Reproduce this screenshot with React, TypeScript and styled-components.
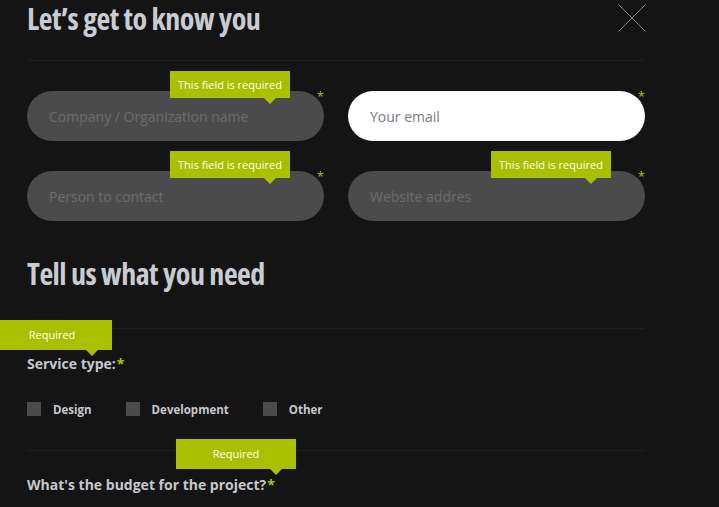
import React from 'react';
import styled, {createGlobalStyle} from 'styled-components';

type FieldType = {
    placeholder: string
    tip?: boolean
    focused?: boolean
}

const fields: FieldType[] = [
    {placeholder: 'Company / Organization name', tip: true},
    {placeholder: 'Your email', focused: true},
    {placeholder: 'Person to contact', tip: true},
    {placeholder: 'Website addres', tip: true},
]

const services = ['Design', 'Development', 'Other']

const Field = (props: FieldType) => {
    return (
        <FieldWrap>
            <Input placeholder={props.placeholder} focused={props.focused} autoFocus={props.focused}/>
            <Star>*</Star>
            {props.tip && <Tip left={143} top={-20} height={27}>This field is required</Tip>}
        </FieldWrap>
    )
}

export default function App() {
    return (
        <>
            <GlobalStyle/>
            <Page>
                <Header>
                    <Title>Let’s get to know you</Title>
                    <Close aria-label="close">
                        <svg width="28" height="28" viewBox="0 0 28 28">
                            <path d="M0.5 0.5 L27.5 27.5 M27.5 0.5 L0.5 27.5" stroke="#8a8a8a" strokeWidth="1" fill="none"/>
                        </svg>
                    </Close>
                </Header>
                <Divider/>

                <Fields>
                    {fields.map(f => <Field key={f.placeholder} {...f}/>)}
                </Fields>

                <SubTitle>Tell us what you need</SubTitle>
                <Divider top={37}/>

                <Label top={25}>
                    Service type:<Req>*</Req>
                    <Tip left={-35} top={-34} height={30}>Required</Tip>
                </Label>
                <Checks>
                    {services.map(s => (
                        <CheckItem key={s}>
                            <Box/>
                            {s}
                        </CheckItem>
                    ))}
                </Checks>
                <Divider top={34}/>

                <Label top={24}>
                    What's the budget for the project?<Req>*</Req>
                    <Tip left={149} top={-36} height={30}>Required</Tip>
                </Label>
            </Page>
        </>
    )
}

//=========================GLOBAL==================================

const GlobalStyle = createGlobalStyle`
  html, body {
    margin: 0;
    padding: 0;
    background: #141414;
    overflow: hidden;
  }
  body {
    font-family: "Open Sans", "Liberation Sans", sans-serif;
  }
`

const Page = styled.div`
  width: 618px;
  height: 507px;
  padding-left: 27px;
  box-sizing: content-box;
  display: flex;
  flex-direction: column;
`

//=========================HEADER==================================

const Header = styled.div`
  height: 60px;
  display: flex;
  justify-content: space-between;
  align-items: flex-start;
`

const Title = styled.h1`
  margin: 0;
  padding-top: 2px;
  font-family: "Open Sans", sans-serif;
  font-stretch: 75%;
  font-weight: 700;
  font-size: 30px;
  line-height: 34px;
  letter-spacing: -0.5px;
  color: #c9cdd3;
`

const SubTitle = styled(Title)`
  margin-top: 34px;
`

const Close = styled.div`
  width: 28px;
  height: 28px;
  margin-top: 4px;
  margin-right: -1px;
`

const Divider = styled.div<{ top?: number }>`
  height: 1px;
  background: #1f1f1f;
  margin-top: ${p => p.top || 0}px;
`

//=========================FIELDS==================================

const Fields = styled.div`
  margin-top: 30px;
  display: grid;
  grid-template-columns: 297px 297px;
  column-gap: 24px;
  row-gap: 30px;
`

const FieldWrap = styled.div`
  position: relative;
  height: 50px;
`

const Input = styled.input<{ focused?: boolean }>`
  width: 100%;
  height: 50px;
  box-sizing: border-box;
  border: none;
  outline: none;
  border-radius: 25px;
  padding: 0 22px;
  background: ${p => p.focused ? '#ffffff' : '#4b4b4b'};
  font-family: "Open Sans", sans-serif;
  font-size: 14px;
  color: #333;
  caret-color: #333;

  &::placeholder {
    color: ${p => p.focused ? '#7a7a82' : '#6c6c6c'};
  }
`

const Star = styled.span`
  position: absolute;
  top: -1px;
  right: 0;
  color: #a8c400;
  font-size: 13px;
  font-weight: 400;
  line-height: 13px;
`

const Tip = styled.div<{ left: number, top: number, height: number }>`
  position: absolute;
  left: ${p => p.left}px;
  top: ${p => p.top}px;
  width: 120px;
  height: ${p => p.height}px;
  background: #a8c000;
  color: #ffffff;
  font-family: "Open Sans", sans-serif;
  font-weight: 400;
  font-size: 11px;
  display: flex;
  align-items: center;
  justify-content: center;
  white-space: nowrap;

  &::after {
    content: '';
    position: absolute;
    right: 14px;
    bottom: -6px;
    border-left: 6px solid transparent;
    border-right: 6px solid transparent;
    border-top: 6px solid #a8c000;
  }
`

//=========================SERVICES================================

const Label = styled.div<{ top: number }>`
  position: relative;
  margin-top: ${p => p.top}px;
  font-size: 14px;
  line-height: 20px;
  font-weight: 700;
  color: #c6c8cc;
`

const Req = styled.span`
  color: #a8c400;
  margin-left: 1px;
`

const Checks = styled.div`
  margin-top: 28px;
  display: flex;
  gap: 34px;
`

const CheckItem = styled.label`
  display: flex;
  align-items: center;
  gap: 12px;
  height: 14px;
  font-size: 11.5px;
  font-weight: 700;
  color: #c6c8cc;
`

const Box = styled.span`
  width: 14px;
  height: 14px;
  background: #4b4b4b;
`
